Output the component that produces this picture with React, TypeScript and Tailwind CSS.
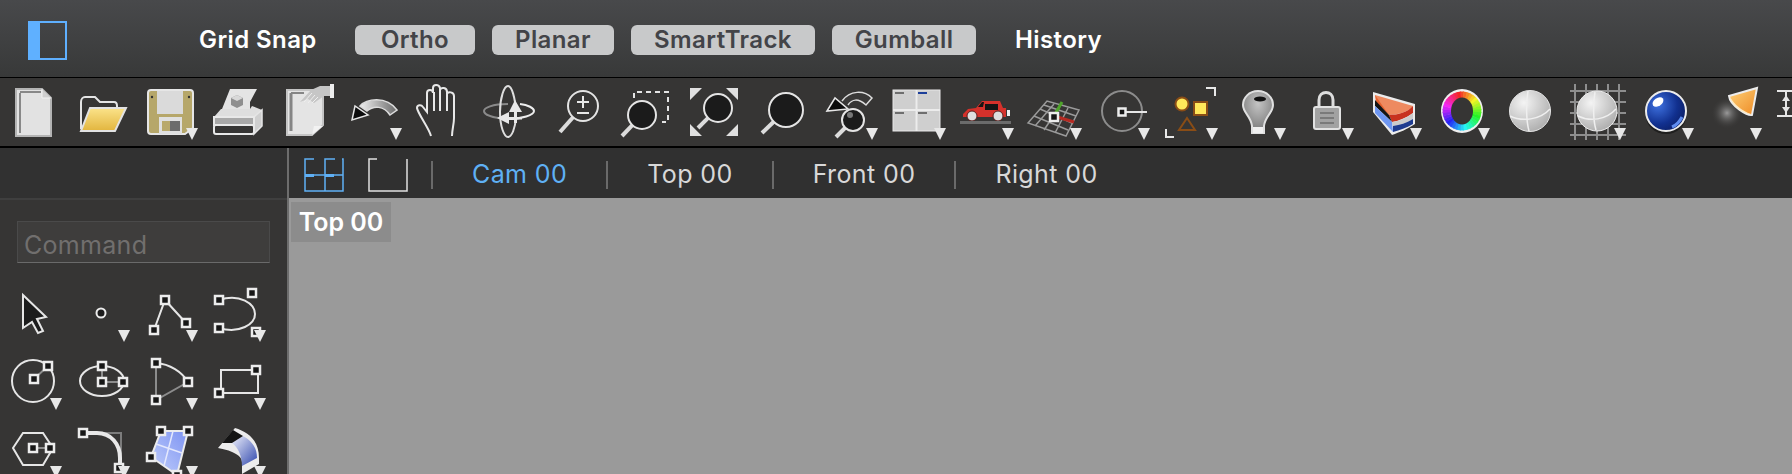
import React from 'react';

const FONT = 'font-["Inter","Noto_Sans",sans-serif]';
const LINE = '#e6e6e6';

// Little square control point used by most of the curve tools
const Node = ({ x, y, s = 8 }: { x: number; y: number; s?: number }) => (
  <rect x={x - s / 2} y={y - s / 2} width={s} height={s} fill="#161616" stroke="#ececec" strokeWidth={2.5} />
);

const Glass = ({ cx, cy, r, hx, hy, fill = '#1b1b1b' }: { cx: number; cy: number; r: number; hx: number; hy: number; fill?: string }) => {
  const d = Math.hypot(cx - hx, cy - hy);
  const sx = cx + ((hx - cx) / d) * r;
  const sy = cy + ((hy - cy) / d) * r;
  return (
    <>
      <line x1={sx} y1={sy} x2={hx} y2={hy} stroke="#dcdcdc" strokeWidth={4} />
      <circle cx={cx} cy={cy} r={r} fill={fill} stroke="#e4e4e4" strokeWidth={2} />
    </>
  );
};

// Colour ring: wedges stepped round the hue circle
const HueRing = ({ cx, cy, r }: { cx: number; cy: number; r: number }) => {
  const steps = 36;
  return (
    <>
      {Array.from({ length: steps }, (_, i) => {
        const a0 = ((i - 0.6) / steps) * Math.PI * 2 - Math.PI / 2;
        const a1 = ((i + 0.6) / steps) * Math.PI * 2 - Math.PI / 2;
        const hue = (i / steps) * 360 + 10;
        return (
          <polygon
            key={i}
            points={`${cx},${cy} ${cx + Math.cos(a0) * r},${cy + Math.sin(a0) * r} ${cx + Math.cos(a1) * r},${cy + Math.sin(a1) * r}`}
            fill={`hsl(${hue} 90% 55%)`}
          />
        );
      })}
    </>
  );
};

// One 68px tool cell, the small triangle marks a flyout
const Tool = ({ arrow, children }: { arrow?: boolean; children?: React.ReactNode }) => (
  <svg width={68} height={68} viewBox="0 0 68 68" className="shrink-0 block">
    {children}
    {arrow && <polygon points="54,50 66,50 60,62" fill="#e8e8e8" />}
  </svg>
);

const toolbar: { arrow?: boolean; icon: React.ReactNode }[] = [
  {
    icon: (
      <>
        <path d="M20 11H46L55 20V58H20Z" fill="#e2e2e2" stroke="#b4b4b4" strokeWidth={2} />
        <path d="M24 15V55" stroke="#888" strokeWidth={2} />
        <path d="M24 14H45" stroke="#888" strokeWidth={2} />
        <path d="M46 11V20H55" fill="#cfcfcf" stroke="#f2f2f2" strokeWidth={1} />
      </>
    ),
  },
  {
    icon: (
      <>
        <defs>
          <linearGradient id="folderFill" x1="0" y1="0" x2="0" y2="1">
            <stop offset="0" stopColor="#fbe38a" />
            <stop offset="1" stopColor="#e2b53e" />
          </linearGradient>
        </defs>
        <path d="M17 51V24C17 21 19 19 21 19H31L36 24H50C52 24 53 25 53 28V30" fill="none" stroke="#e4e4e4" strokeWidth={2} />
        <path d="M26 30H62L51 53H17Z" fill="url(#folderFill)" stroke="#e2e2e2" strokeWidth={2} />
      </>
    ),
  },
  {
    arrow: true,
    icon: (
      <>
        <path d="M16 15Q16 12 19 12H58Q61 12 61 15V50L53 56H19Q16 56 16 53Z" fill="#b6a76a" stroke="#e6e6e6" strokeWidth={2} />
        <rect x={25} y={13} width={26} height={23} fill="#dadada" />
        <rect x={27} y={39} width={23} height={17} fill="#e0e0e0" />
        <rect x={30} y={43} width={8} height={10} fill="#b9a96b" />
        <rect x={38} y={43} width={10} height={10} fill="#6c6c6c" />
        <circle cx={20} cy={19} r={1.2} fill="#333" />
        <circle cx={57} cy={19} r={1.2} fill="#333" />
      </>
    ),
  },
  {
    icon: (
      <>
        <path d="M22 31L30 11H57L50 24V31Z" fill="#e4e4e4" />
        <path d="M31 20L37 17L43 20V27L37 30L31 27Z" fill="#8f8f8f" />
        <path d="M37 17L43 20L37 23L31 20Z" fill="#d8d8d8" />
        <path d="M14 39L21 31H50L52 28L62 32L54 39Z" fill="#dedede" />
        <path d="M54 39L62 32V48L54 56Z" fill="#cfcfcf" stroke="#e6e6e6" strokeWidth={1.5} />
        <rect x={14} y={39} width={40} height={8} fill="#a8a8a8" stroke="#e8e8e8" strokeWidth={2} />
        <rect x={14} y={47} width={40} height={9} rx={2} fill="#363534" stroke="#e8e8e8" strokeWidth={2} />
      </>
    ),
  },
  {
    icon: (
      <>
        <path d="M19 12H55V47L44 57H19Z" fill="#e4e4e4" stroke="#c4c4c4" strokeWidth={2} />
        <path d="M23 15V53" stroke="#858585" strokeWidth={3} />
        <path d="M23 15H36" stroke="#858585" strokeWidth={2} />
        <path d="M44 57L46 48H55Z" fill="#f2f2f2" />
        <path d="M32 24L43 12L52 8H62V18H56L46 25L40 21Z" fill="#c6c6c6" />
        <path d="M36 24L44 15M40 25L47 17M44 25L50 19" stroke="#efefef" strokeWidth={1} />
        <rect x={62} y={6} width={4} height={14} fill="#ededed" />
      </>
    ),
  },
  {
    arrow: true,
    icon: (
      <>
        <defs>
          <linearGradient id="undoArc" x1="0" y1="0" x2="1" y2="0">
            <stop offset="0" stopColor="#f0f0f0" />
            <stop offset="1" stopColor="#6a6a6a" />
          </linearGradient>
        </defs>
        <path d="M24 28C30 21 50 17 61 32L54 37C48 28 38 27 31 33Z" fill="url(#undoArc)" stroke="#dcdcdc" strokeWidth={1.5} />
        <polygon points="16,42 19,28 32,37" fill="#0c0c0c" stroke="#e6e6e6" strokeWidth={1.5} />
      </>
    ),
  },
  {
    icon: (
      <path
        d="M27 58C25 50 14 36 13 30C13 27 17 26 19 29L23 34V15C23 11 29 11 29 15V10C29 6 35 6 36 10V12C37 9 43 9 43 14V16C44 13 50 14 50 18V40C50 46 48 52 48 58M30 14V33M36 11V33M43 14V33"
        fill="none"
        stroke="#e8e8e8"
        strokeWidth={2}
      />
    ),
  },
  {
    icon: (
      <>
        <path d="M36 26C20 26 12 30 12 33C12 37 22 40 36 41" fill="none" stroke="#8a8a8a" strokeWidth={2} />
        <path d="M36 41C50 41 62 37 62 33C62 30 56 27 48 26" fill="none" stroke="#eeeeee" strokeWidth={2} />
        <path d="M36 8C40 8 43 20 44 33M36 8C32 8 28 20 28 34C28 48 32 59 36 59C40 59 43 50 44 40" fill="none" stroke="#dedede" strokeWidth={2} />
        <polygon points="43,22 50,34 37,34" fill="#e8e8e8" />
        <rect x={42} y={33} width={3} height={12} fill="#e8e8e8" />
        <polygon points="25,40 37,34 37,46" fill="#e8e8e8" />
        <rect x={36} y={39} width={14} height={2.5} fill="#e8e8e8" />
      </>
    ),
  },
  {
    icon: (
      <>
        <Glass cx={43} cy={28} r={15} hx={20} hy={54} fill="#363534" />
        <path d="M37 24H49M43 18V30M37 35H49" stroke="#e8e8e8" strokeWidth={2} />
      </>
    ),
  },
  {
    icon: (
      <>
        <path d="M26 20V14H60V44H54" fill="none" stroke="#e4e4e4" strokeWidth={2} strokeDasharray="5 4" />
        <Glass cx={34} cy={37} r={14} hx={14} hy={58} />
      </>
    ),
  },
  {
    icon: (
      <>
        <path d="M14 10H26L14 22ZM62 10V22L50 10ZM14 58V46L26 58ZM62 58H50L62 46Z" fill="#e0e0e0" />
        <Glass cx={42} cy={30} r={14} hx={22} hy={50} />
      </>
    ),
  },
  { icon: <Glass cx={42} cy={32} r={17} hx={18} hy={55} /> },
  {
    arrow: true,
    icon: (
      <>
        <path d="M30 23C38 12 52 12 60 20L54 27C46 20 40 21 36 27" fill="#3a3938" stroke="#dcdcdc" strokeWidth={1.5} />
        <polygon points="15,33 23,20 36,31" fill="#0c0c0c" stroke="#e6e6e6" strokeWidth={1.5} />
        <Glass cx={41} cy={42} r={11} hx={24} hy={59} />
        <circle cx={38} cy={37} r={3} fill="#777" />
      </>
    ),
  },
  {
    arrow: true,
    icon: (
      <>
        <rect x={13} y={12} width={47} height={41} fill="#cfcfcf" stroke="#e8e8e8" strokeWidth={1} />
        <path d="M36.5 12V53M13 32H60" stroke="#ececec" strokeWidth={2} />
        <rect x={15} y={14} width={9} height={2} fill="#6e6e6e" />
        <rect x={38} y={14} width={9} height={2} fill="#1d3f9a" />
        <rect x={15} y={34} width={9} height={2} fill="#6e6e6e" />
        <rect x={38} y={34} width={9} height={2} fill="#6e6e6e" />
      </>
    ),
  },
  {
    arrow: true,
    icon: (
      <>
        <path d="M15 36L20 31L28 30L34 23H52L55 30H58V39H15Z" fill="#d5312b" />
        <path d="M37 26H50V32H37Z" fill="#151515" />
        <path d="M30 29L34 24H36L35 29Z" fill="#151515" />
        <rect x={59} y={32} width={3} height={6} fill="#eee" />
        <circle cx={24} cy={38} r={5} fill="#dedede" stroke="#5a1d1b" strokeWidth={1} />
        <circle cx={50} cy={38} r={5} fill="#dedede" stroke="#5a1d1b" strokeWidth={1} />
        <rect x={12} y={43} width={51} height={3} fill="#6b6b6b" />
      </>
    ),
  },
  {
    arrow: true,
    icon: (
      <>
        <path
          d="M12 45L31 23L63 32L50 58ZM18 38L52 52M24 31L56 45M28 27L60 38M19 48L38 26M28 52L44 28M39 55L52 30"
          fill="none"
          stroke="#9a9a9a"
          strokeWidth={1.5}
        />
        <path d="M38 38L46 24" stroke="#4fa52a" strokeWidth={3} />
        <path d="M38 38L58 44" stroke="#b52a22" strokeWidth={3} />
        <Node x={38} y={39} s={8} />
      </>
    ),
  },
  {
    arrow: true,
    icon: (
      <>
        <circle cx={38} cy={33} r={20} fill="none" stroke="#8c8c8c" strokeWidth={2} />
        <path d="M38 34H63" stroke="#e6e6e6" strokeWidth={2} />
        <Node x={38} y={34} s={7} />
      </>
    ),
  },
  {
    arrow: true,
    icon: (
      <>
        <circle cx={30} cy={26} r={6.5} fill="#ffe85a" stroke="#8a4d16" strokeWidth={2} />
        <rect x={42} y={24} width={13} height={13} fill="#ffe85a" stroke="#8a4d16" strokeWidth={2} />
        <polygon points="35,40 43,52 27,52" fill="none" stroke="#8a4d16" strokeWidth={2} />
        <path d="M54 10H63V18M14 51V59H22" fill="none" stroke="#e8e8e8" strokeWidth={2} />
      </>
    ),
  },
  {
    arrow: true,
    icon: (
      <>
        <defs>
          <radialGradient id="bulbFill" cx="0.5" cy="0.3" r="0.7">
            <stop offset="0" stopColor="#c4c4c4" />
            <stop offset="1" stopColor="#777" />
          </radialGradient>
        </defs>
        <path d="M38 13C47 13 53 20 53 27C53 35 45 38 44 48V55H32V48C31 38 23 35 23 27C23 20 29 13 38 13Z" fill="url(#bulbFill)" stroke="#e0e0e0" strokeWidth={2} />
        <ellipse cx={40} cy={21} rx={6} ry={2.5} fill="#111" />
        <rect x={33} y={49} width={10} height={6} fill="#f0f0f0" />
      </>
    ),
  },
  {
    arrow: true,
    icon: (
      <>
        <path d="M31 30V22C31 12 45 12 45 22V30" fill="none" stroke="#dedede" strokeWidth={3} />
        <rect x={26} y={29} width={26} height={22} rx={2} fill="#a2a2a2" stroke="#e2e2e2" strokeWidth={2} />
        <path d="M32 35H46M32 40H46M32 45H46" stroke="#6e6e6e" strokeWidth={1.5} />
      </>
    ),
  },
  {
    arrow: true,
    icon: (
      <>
        <path d="M17 14L59 26V46C50 52 44 54 36 57L17 34Z" fill="#ececec" />
        <path d="M19 17L57 28C54 33 42 37 33 37L21 25Z" fill="#ee8a60" />
        <path d="M19 17L33 37L20 24Z" fill="#e5622f" />
        <path d="M33 37C42 37 52 34 57 28V35C50 40 42 43 36 44Z" fill="#c8321f" />
        <path d="M19 22L33 37L36 44L19 28Z" fill="#151515" />
        <path d="M36 44C44 43 50 40 57 35V41C50 45 44 47 37 48Z" fill="#cccccc" />
        <path d="M37 48C44 47 50 45 57 41V46C50 50 44 52 37 54Z" fill="#1f3c90" />
        <path d="M19 28L36 44L37 54L19 35Z" fill="#6f97f2" />
      </>
    ),
  },
  {
    arrow: true,
    icon: (
      <>
        <ellipse cx={38} cy={33} rx={21} ry={22} fill="#efefef" />
        <HueRing cx={38} cy={33} r={19.5} />
        <ellipse cx={38} cy={33} rx={11} ry={13.5} fill="#363534" />
      </>
    ),
  },
  {
    icon: (
      <>
        <defs>
          <radialGradient id="shadeA" cx="0.35" cy="0.3" r="0.8">
            <stop offset="0" stopColor="#f4f4f4" />
            <stop offset="1" stopColor="#a9a9a9" />
          </radialGradient>
        </defs>
        <circle cx={38} cy={33} r={20.5} fill="url(#shadeA)" stroke="#e4e4e4" strokeWidth={1} />
        <path d="M36 13C34 25 34 42 37 53M18 38C30 44 48 42 58 31" fill="none" stroke="#efefef" strokeWidth={1.5} />
      </>
    ),
  },
  {
    arrow: true,
    icon: (
      <>
        <defs>
          <radialGradient id="shadeB" cx="0.35" cy="0.3" r="0.8">
            <stop offset="0" stopColor="#f4f4f4" />
            <stop offset="1" stopColor="#a9a9a9" />
          </radialGradient>
        </defs>
        <path
          d="M10 13H66M10 24H66M10 35H66M10 46H66M10 57H66M15 6V62M26 6V62M37 6V62M48 6V62M59 6V62"
          stroke="#8e8e8e"
          strokeWidth={2}
        />
        <circle cx={37} cy={33} r={20} fill="url(#shadeB)" stroke="#ececec" strokeWidth={1} />
        <path d="M35 14C33 25 33 42 36 52M18 38C30 44 46 42 56 31" fill="none" stroke="#efefef" strokeWidth={1.5} />
      </>
    ),
  },
  {
    arrow: true,
    icon: (
      <>
        <defs>
          <radialGradient id="ballBlue" cx="0.3" cy="0.35" r="0.8">
            <stop offset="0" stopColor="#3f72e0" />
            <stop offset="0.6" stopColor="#11308f" />
            <stop offset="1" stopColor="#0a1c60" />
          </radialGradient>
        </defs>
        <ellipse cx={38} cy={38} rx={20} ry={18} fill="#111" opacity={0.6} />
        <circle cx={38} cy={33} r={20} fill="url(#ballBlue)" stroke="#ececec" strokeWidth={2} />
        <ellipse cx={30} cy={24} rx={6} ry={4} fill="#fff" transform="rotate(-35 30 24)" />
        <path d="M44 49C49 47 52 43 54 39" stroke="#5f8df0" strokeWidth={3} fill="none" />
      </>
    ),
  },
  {
    arrow: true,
    icon: (
      <>
        <defs>
          <radialGradient id="coneGlow">
            <stop offset="0" stopColor="#9a9a9a" />
            <stop offset="1" stopColor="#363534" stopOpacity={0} />
          </radialGradient>
          <linearGradient id="coneFill" x1="0" y1="0" x2="1" y2="1">
            <stop offset="0" stopColor="#fdd27a" />
            <stop offset="1" stopColor="#ee8a24" />
          </linearGradient>
        </defs>
        <circle cx={31} cy={35} r={16} fill="url(#coneGlow)" />
        <path d="M33 18L61 10L56 37C52 38 34 28 33 18Z" fill="url(#coneFill)" stroke="#ececec" strokeWidth={2} />
        <path d="M34 19C38 26 46 33 55 36C50 37 36 29 34 19Z" fill="#fdeac2" />
      </>
    ),
  },
  {
    icon: (
      <>
        <path d="M13 13H34M13 38H34M22 14V38" stroke="#e6e6e6" strokeWidth={2} />
        <polygon points="22,17 26,23 18,23" fill="#e6e6e6" />
        <polygon points="22,35 26,29 18,29" fill="#e6e6e6" />
      </>
    ),
  },
];

const commands: { arrow?: boolean; icon: React.ReactNode }[] = [
  {
    icon: <polygon points="27,15 50,37 41,39 47,51 42,53 36,42 27,48" fill="#1c1c1c" stroke="#e6e6e6" strokeWidth={2} />,
  },
  { arrow: true, icon: <circle cx={37} cy={33} r={4.5} fill="#1c1c1c" stroke="#ececec" strokeWidth={2} /> },
  {
    arrow: true,
    icon: (
      <>
        <polyline points="22,50 33,20 54,43" fill="none" stroke={LINE} strokeWidth={2} />
        <Node x={22} y={50} />
        <Node x={33} y={20} />
        <Node x={54} y={43} />
      </>
    ),
  },
  {
    arrow: true,
    icon: (
      <>
        <path d="M19 20C40 13 55 24 55 34C55 44 40 54 19 48" fill="none" stroke={LINE} strokeWidth={2} />
        <Node x={19} y={20} />
        <Node x={52} y={13} />
        <Node x={19} y={48} />
        <Node x={56} y={52} />
      </>
    ),
  },
  {
    arrow: true,
    icon: (
      <>
        <circle cx={37} cy={33} r={21} fill="none" stroke={LINE} strokeWidth={2} />
        <line x1={38} y1={31} x2={52} y2={18} stroke="#8c8c8c" strokeWidth={2} />
        <Node x={38} y={31} />
        <Node x={52} y={18} />
      </>
    ),
  },
  {
    arrow: true,
    icon: (
      <>
        <ellipse cx={38} cy={33} rx={22} ry={15} fill="none" stroke={LINE} strokeWidth={2} />
        <path d="M38 18V34H59" stroke="#8c8c8c" strokeWidth={2} fill="none" />
        <Node x={38} y={18} />
        <Node x={38} y={34} />
        <Node x={59} y={34} />
      </>
    ),
  },
  {
    arrow: true,
    icon: (
      <>
        <path d="M24 15V52L56 34" fill="none" stroke="#8c8c8c" strokeWidth={2} />
        <path d="M24 15C38 16 50 24 56 34" fill="none" stroke={LINE} strokeWidth={2} />
        <Node x={24} y={15} />
        <Node x={56} y={34} />
        <Node x={24} y={52} />
      </>
    ),
  },
  {
    arrow: true,
    icon: (
      <>
        <rect x={21} y={22} width={37} height={23} fill="none" stroke={LINE} strokeWidth={2} />
        <Node x={19} y={45} />
        <Node x={56} y={22} />
      </>
    ),
  },
  {
    arrow: true,
    icon: (
      <>
        <polygon points="17,32 27,17 47,17 57,32 47,49 27,49" fill="none" stroke={LINE} strokeWidth={2} />
        <line x1={37} y1={32} x2={54} y2={32} stroke="#8c8c8c" strokeWidth={2} />
        <Node x={37} y={32} />
        <Node x={54} y={32} />
      </>
    ),
  },
  {
    arrow: true,
    icon: (
      <>
        <path d="M22 17H57V52" fill="none" stroke="#7c7c7c" strokeWidth={2} />
        <path d="M19 17H33C47 17 56 28 56 42V52" fill="none" stroke="#e8e8e8" strokeWidth={4} />
        <Node x={19} y={17} />
        <Node x={55} y={52} />
      </>
    ),
  },
  {
    arrow: true,
    icon: (
      <>
        <defs>
          <linearGradient id="srfFill" x1="0" y1="1" x2="1" y2="0">
            <stop offset="0" stopColor="#c3d0fb" />
            <stop offset="1" stopColor="#7d93f2" />
          </linearGradient>
        </defs>
        <polygon points="29,15 56,15 45,59 19,41" fill="url(#srfFill)" stroke="#ececec" strokeWidth={2} />
        <path d="M41 15L32 50M24 28L50 37" stroke="#e4e8fd" strokeWidth={1.5} />
        <Node x={29} y={15} />
        <Node x={56} y={15} />
        <Node x={19} y={41} />
        <Node x={45} y={59} />
      </>
    ),
  },
  {
    arrow: true,
    icon: (
      <>
        <defs>
          <linearGradient id="extFill" x1="0" y1="0" x2="1" y2="1">
            <stop offset="0" stopColor="#eef0fb" />
            <stop offset="1" stopColor="#2f47ad" />
          </linearGradient>
        </defs>
        <path d="M18 32L35 12C48 16 59 24 59 42V48L42 58V46C42 40 34 35 18 32Z" fill="#ececec" />
        <path d="M32 27L43 20C50 24 57 30 57 42L42 50C42 40 38 31 32 27Z" fill="url(#extFill)" />
        <path d="M22 27L33 14L43 20L32 27Z" fill="#141414" />
      </>
    ),
  },
];

const TAB_DIVIDER = 'w-0.5 h-7 bg-[#6a6a6a] shrink-0';

const App: React.FC = () => {
  return (
    <div className={`w-[1792px] h-[474px] overflow-hidden flex flex-col bg-[#363534] ${FONT}`}>
      {/* Title bar */}
      <header className="h-[78px] shrink-0 flex items-center border-b border-black bg-gradient-to-b from-[#48494b] to-[#383939] pt-[3px]">
        <div className="ml-7 w-[39px] h-[39px] border-2 border-[#5fb0ff] flex shrink-0">
          <div className="w-[10px] bg-[#5fb0ff]" />
        </div>
        <div className="ml-[132px] w-[118px] text-[24px] tracking-[0.4px] font-semibold text-white whitespace-nowrap">Grid Snap</div>
        <div className="ml-[38px] flex gap-[17px] text-[24px] tracking-[0.4px] font-semibold text-[#434448]">
          <div className="w-[120px] h-[30px] rounded-md bg-[#c8c9ca] flex items-center justify-center">Ortho</div>
          <div className="w-[122px] h-[30px] rounded-md bg-[#c8c9ca] flex items-center justify-center">Planar</div>
          <div className="w-[184px] h-[30px] rounded-md bg-[#c8c9ca] flex items-center justify-center">SmartTrack</div>
          <div className="w-[144px] h-[30px] rounded-md bg-[#c8c9ca] flex items-center justify-center">Gumball</div>
        </div>
        <div className="ml-[39px] text-[24px] tracking-[0.4px] font-semibold text-white">History</div>
      </header>

      {/* Main toolbar */}
      <div className="h-[70px] shrink-0 flex -ml-1 border-b-2 border-black bg-[#363534] overflow-hidden">
        {toolbar.map((t, i) => (
          <Tool key={i} arrow={t.arrow}>
            {t.icon}
          </Tool>
        ))}
      </div>

      <div className="flex flex-1 min-h-0">
        {/* Side panel */}
        <aside className="w-[289px] shrink-0 flex flex-col border-r-2 border-[#6d6d6d] overflow-hidden">
          <div className="h-[52px] shrink-0 bg-[#313131] border-b-2 border-[#3f3f3f]" />
          <div className="mt-[21px] ml-[17px] w-[253px] h-[42px] shrink-0 bg-[#3e3d3c] border border-[#4a4a4a] border-b-[#6a6a6a] flex items-center pl-[6px] pt-2 text-[25px] tracking-[0.3px] text-[#716f6e]">
            Command
          </div>
          <div className="mt-[17px] -ml-1 grid grid-cols-[repeat(4,68px)] auto-rows-[68px]">
            {commands.map((t, i) => (
              <Tool key={i} arrow={t.arrow}>
                {t.icon}
              </Tool>
            ))}
          </div>
        </aside>

        {/* Viewport area */}
        <main className="flex-1 flex flex-col min-w-0">
          <div className="h-[50px] shrink-0 bg-[#303030] flex items-center text-[25px] tracking-[0.4px] pl-[15px] pt-1 text-[#d8d8d8]">
            <svg width={40} height={34} viewBox="0 0 40 34" className="shrink-0">
              <path d="M10 1H1V33H39V1H38M21 33V1H31M1 17H39" fill="none" stroke="#5fb0f5" strokeWidth={1.5} />
              <rect x={1} y={16} width={9} height={3} fill="#5fb0f5" />
              <rect x={21} y={16} width={9} height={3} fill="#5fb0f5" />
            </svg>
            <svg width={40} height={34} viewBox="0 0 40 34" className="ml-6 shrink-0">
              <path d="M9 1H1V33H39V1" fill="none" stroke="#e0e0e0" strokeWidth={1.5} />
            </svg>
            <div className={`ml-[23px] ${TAB_DIVIDER}`} />
            <div className="px-[39px] text-[#5fb0f5]">Cam 00</div>
            <div className={TAB_DIVIDER} />
            <div className="px-[39px]">Top 00</div>
            <div className={TAB_DIVIDER} />
            <div className="px-[39px]">Front 00</div>
            <div className={TAB_DIVIDER} />
            <div className="px-[39px]">Right 00</div>
          </div>
          <div className="flex-1 bg-[#9a9a9a] pl-0.5 pt-1">
            <div className="w-[100px] h-10 bg-[#8c8c8c] flex items-center justify-center pt-0.5 text-[25px] font-semibold text-white">
              Top 00
            </div>
          </div>
        </main>
      </div>
    </div>
  );
};

export default App;
